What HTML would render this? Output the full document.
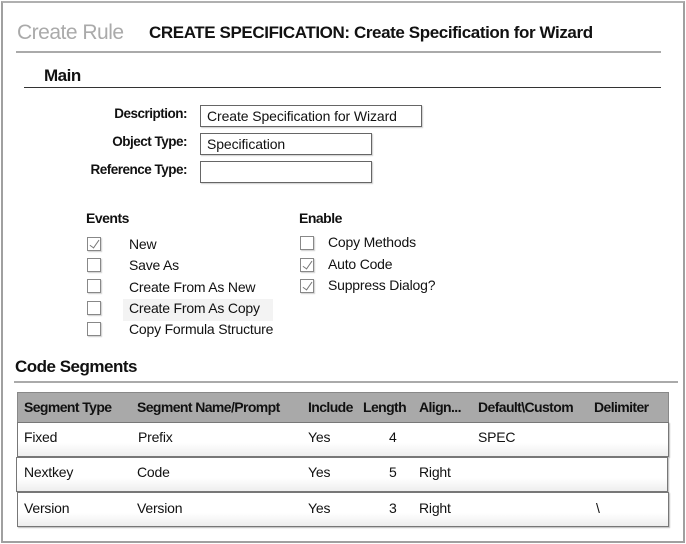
<!DOCTYPE html>
<html><head><style>
*{margin:0;padding:0;box-sizing:border-box}
body{width:686px;height:544px;background:#fff;font-family:"Liberation Sans",sans-serif;position:relative;overflow:hidden;color:#111}
.a{position:absolute;white-space:nowrap}
.frame{position:absolute;left:1px;top:1px;width:684px;height:542px;border:2px solid #a0a0a0;border-top-color:#b0b0b0}
.lbl{font-size:13.5px;font-weight:bold;letter-spacing:-0.5px;text-align:right;width:160px;left:27px}
.inp{position:absolute;border:1px solid #666;height:22px;font-size:14px;padding:2px 6px;letter-spacing:-0.1px;box-shadow:1px 1px 1px #ccc}
.cb{position:absolute;width:14px;height:14px;border:1px solid #888;background:#fff;box-shadow:1px 1px 1px #ccc}
.cb.c::after{content:"";position:absolute;left:4px;top:0px;width:4px;height:9px;border-right:1px solid #777;border-bottom:1px solid #777;transform:rotate(35deg)}
.t{font-size:14px;letter-spacing:-0.2px}
.h{font-size:17px;font-weight:bold;letter-spacing:-0.5px}
.row{position:absolute;left:17px;width:652px;border:1px solid #777;background:linear-gradient(#fff,#fff 60%,#eee);box-shadow:1px 1px 1px #bbb}
</style></head><body>
<div class="frame"></div>
<div class="a" style="left:17px;top:21px;font-size:21px;color:#aaa;letter-spacing:-0.5px">Create Rule</div>
<div class="a" style="left:149px;top:23px;font-size:17px;font-weight:bold;letter-spacing:-0.4px">CREATE SPECIFICATION: Create Specification for Wizard</div>
<div class="a" style="left:16px;top:51px;width:645px;height:2px;background:#aaa"></div>
<div class="a h" style="left:44px;top:66px">Main</div>
<div class="a" style="left:24px;top:87px;width:637px;height:1px;background:#333"></div>

<div class="a lbl" style="top:106px">Description:</div>
<div class="a lbl" style="top:134px">Object Type:</div>
<div class="a lbl" style="top:162px">Reference Type:</div>
<div class="inp" style="left:200px;top:105px;width:222px">Create Specification for Wizard</div>
<div class="inp" style="left:200px;top:133px;width:172px">Specification</div>
<div class="inp" style="left:200px;top:161px;width:172px"></div>

<div class="a t" style="left:86px;top:210px;font-weight:bold;letter-spacing:-0.5px">Events</div>
<div class="a t" style="left:299px;top:210px;font-weight:bold;letter-spacing:-0.5px">Enable</div>
<div class="cb c" style="left:87px;top:237px"></div><div class="a t" style="left:129px;top:236px">New</div>
<div class="cb" style="left:87px;top:258px"></div><div class="a t" style="left:129px;top:257px">Save As</div>
<div class="cb" style="left:87px;top:279px"></div><div class="a t" style="left:129px;top:279px">Create From As New</div>
<div class="a" style="left:123px;top:299px;width:150px;height:22px;background:#f3f3f3"></div>
<div class="cb" style="left:87px;top:301px"></div><div class="a t" style="left:129px;top:300px">Create From As Copy</div>
<div class="cb" style="left:87px;top:322px"></div><div class="a t" style="left:129px;top:321px">Copy Formula Structure</div>
<div class="cb" style="left:300px;top:236px"></div><div class="a t" style="left:328px;top:234px">Copy Methods</div>
<div class="cb c" style="left:300px;top:258px"></div><div class="a t" style="left:328px;top:256px">Auto Code</div>
<div class="cb c" style="left:300px;top:279px"></div><div class="a t" style="left:328px;top:277px">Suppress Dialog?</div>

<div class="a h" style="left:15px;top:357px">Code Segments</div>
<div class="a" style="left:14px;top:381px;width:664px;height:2px;background:#aaa"></div>

<div class="a" style="left:17px;top:392px;width:652px;height:31px;background:#a9a9a9;border:1px solid #888"></div>
<div class="a t" style="top:399px;left:24px;font-weight:bold;letter-spacing:-0.6px">Segment Type</div>
<div class="a t" style="top:399px;left:137px;font-weight:bold;letter-spacing:-0.6px">Segment Name/Prompt</div>
<div class="a t" style="top:399px;left:308px;font-weight:bold;letter-spacing:-0.6px">Include</div>
<div class="a t" style="top:399px;left:363px;font-weight:bold;letter-spacing:-0.6px">Length</div>
<div class="a t" style="top:399px;left:419px;font-weight:bold;letter-spacing:-0.6px">Align...</div>
<div class="a t" style="top:399px;left:478px;font-weight:bold;letter-spacing:-0.6px">Default\Custom</div>
<div class="a t" style="top:399px;left:594px;font-weight:bold;letter-spacing:-0.6px">Delimiter</div>

<div class="row" style="top:422px;height:35px"></div>
<div class="row" style="top:457px;height:35px;left:16px"></div>
<div class="row" style="top:492px;height:35px"></div>
<div class="a t" style="top:429px;left:24px">Fixed</div><div class="a t" style="top:429px;left:138px">Prefix</div><div class="a t" style="top:429px;left:308px">Yes</div><div class="a t" style="top:429px;left:389px">4</div><div class="a t" style="top:429px;left:478px">SPEC</div>
<div class="a t" style="top:464px;left:24px">Nextkey</div><div class="a t" style="top:464px;left:137px">Code</div><div class="a t" style="top:464px;left:308px">Yes</div><div class="a t" style="top:464px;left:389px">5</div><div class="a t" style="top:464px;left:419px">Right</div>
<div class="a t" style="top:500px;left:24px">Version</div><div class="a t" style="top:500px;left:137px">Version</div><div class="a t" style="top:500px;left:308px">Yes</div><div class="a t" style="top:500px;left:389px">3</div><div class="a t" style="top:500px;left:419px">Right</div><div class="a t" style="top:500px;left:596px">\</div>
</body></html>
